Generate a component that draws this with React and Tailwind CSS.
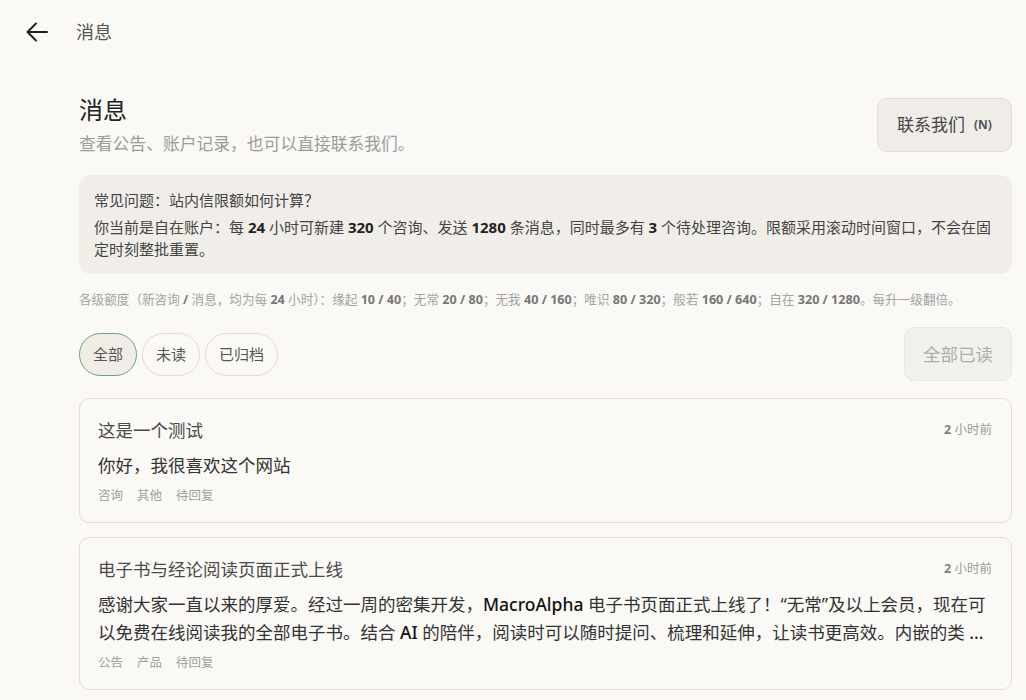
import React from "react";

const FONT = { fontFamily: '"Noto Sans", "Noto Sans CJK SC", sans-serif' };

function BackArrow() {
  return (
    <svg width="22" height="20" viewBox="0 0 22 20" fill="none" stroke="#1f1f1f" strokeWidth="2" strokeLinecap="round" strokeLinejoin="round">
      <path d="M21 10H2" />
      <path d="M10 1.5L1.5 10L10 18.5" />
    </svg>
  );
}

const tiers = [
  ["缘起", "10 / 40"],
  ["无常", "20 / 80"],
  ["无我", "40 / 160"],
  ["唯识", "80 / 320"],
  ["般若", "160 / 640"],
  ["自在", "320 / 1280"],
];

function Pill({ active, children }) {
  return (
    <button
      className={
        active
          ? "h-[43px] px-[13px] rounded-full border border-[#6b9e85] bg-[#f0ede7] text-[15px] text-[#555]"
          : "h-[43px] px-[13px] rounded-full border border-[#e6dacb] bg-[#faf9f6] text-[15px] text-[#555]"
      }
    >
      {children}
    </button>
  );
}

function Card({ title, children, tags }) {
  return (
    <div className="rounded-[10px] border border-[#e7ddcf] bg-[#faf9f6] pl-[18px] pr-[19px] pt-[18px] pb-[17px]">
      <div className="flex items-center justify-between h-[26px]">
        <div className="text-[17.5px] text-[#4a4a4a]">{title}</div>
        <div className="text-[12.5px] text-[#9a9a9a]">
          <span className="font-bold text-[#808080]">2</span> 小时前
        </div>
      </div>
      <div className="mt-[8px] text-[17.5px] leading-[28px] text-[#333]">{children}</div>
      <div className="mt-[8px] flex gap-[14px] text-[12.5px] leading-[18px] text-[#a0a0a0]">
        {tags.map((t) => (
          <span key={t}>{t}</span>
        ))}
      </div>
    </div>
  );
}

export default function App() {
  return (
    <div className="min-h-[700px] bg-[#faf9f6]" style={FONT}>
      <div className="h-[64px] flex items-center pl-[26px]">
        <BackArrow />
        <span className="ml-[28px] text-[18px] text-[#555]">消息</span>
      </div>

      <div className="pl-[79px] pr-[14px]">
        <div className="flex items-start justify-between pt-[30px]">
          <div>
            <h1 className="text-[24px] leading-[32px] text-[#222]">消息</h1>
            <p className="mt-[6px] text-[16.8px] leading-[24px] text-[#9b9b9b]">查看公告、账户记录，也可以直接联系我们。</p>
          </div>
          <button className="mt-[4px] h-[54px] w-[135px] rounded-[10px] border border-[#e4dccf] bg-[#f0ede8] flex items-center justify-center gap-[9px]">
            <span className="text-[17px] text-[#444]">联系我们</span>
            <span className="text-[12px] font-bold text-[#555]">(N)</span>
          </button>
        </div>

        <div className="mt-[19px] rounded-[12px] bg-[#f1eee9] px-[15px] py-[14px] text-[15px] text-[#444]">
          <div className="leading-[22px]">常见问题：站内信限额如何计算？</div>
          <p className="mt-[5px] leading-[22px]">
            你当前是自在账户：每 <b className="text-[#222]">24</b> 小时可新建 <b className="text-[#222]">320</b> 个咨询、发送{" "}
            <b className="text-[#222]">1280</b> 条消息，同时最多有 <b className="text-[#222]">3</b>{" "}
            个待处理咨询。限额采用滚动时间窗口，不会在固定时刻整批重置。
          </p>
        </div>

        <p className="mt-[16px] text-[12.6px] leading-[20px] text-[#a3a3a3]">
          各级额度（新咨询 <b className="text-[#777]">/</b> 消息，均为每 <b className="text-[#777]">24</b> 小时）：
          {tiers.map(([name, val], i) => (
            <span key={name}>
              {name} <b className="text-[#777]">{val}</b>
              {i < tiers.length - 1 ? "；" : "。"}
            </span>
          ))}
          每升一级翻倍。
        </p>

        <div className="mt-[17px] flex items-center justify-between">
          <div className="flex gap-[5px]">
            <Pill active>全部</Pill>
            <Pill>未读</Pill>
            <Pill>已归档</Pill>
          </div>
          <button className="h-[54px] w-[108px] rounded-[10px] border border-[#ebe7e0] bg-[#f2f0ec] text-[17.5px] text-[#acacac]">
            全部已读
          </button>
        </div>

        <div className="mt-[17px] flex flex-col gap-[14px]">
          <Card title="这是一个测试" tags={["咨询", "其他", "待回复"]}>
            你好，我很喜欢这个网站
          </Card>
          <Card title="电子书与经论阅读页面正式上线" tags={["公告", "产品", "待回复"]}>
            感谢大家一直以来的厚爱。经过一周的密集开发，<span className="font-medium text-[#111]">MacroAlpha</span>{" "}
            电子书页面正式上线了！“无常”及以上会员，现在可以免费在线阅读我的全部电子书。结合{" "}
            <span className="font-medium text-[#111]">AI</span>{" "}
            的陪伴，阅读时可以随时提问、梳理和延伸，让读书更高效。内嵌的类 <span className="text-[#111]">...</span>
          </Card>
        </div>
      </div>
    </div>
  );
}
